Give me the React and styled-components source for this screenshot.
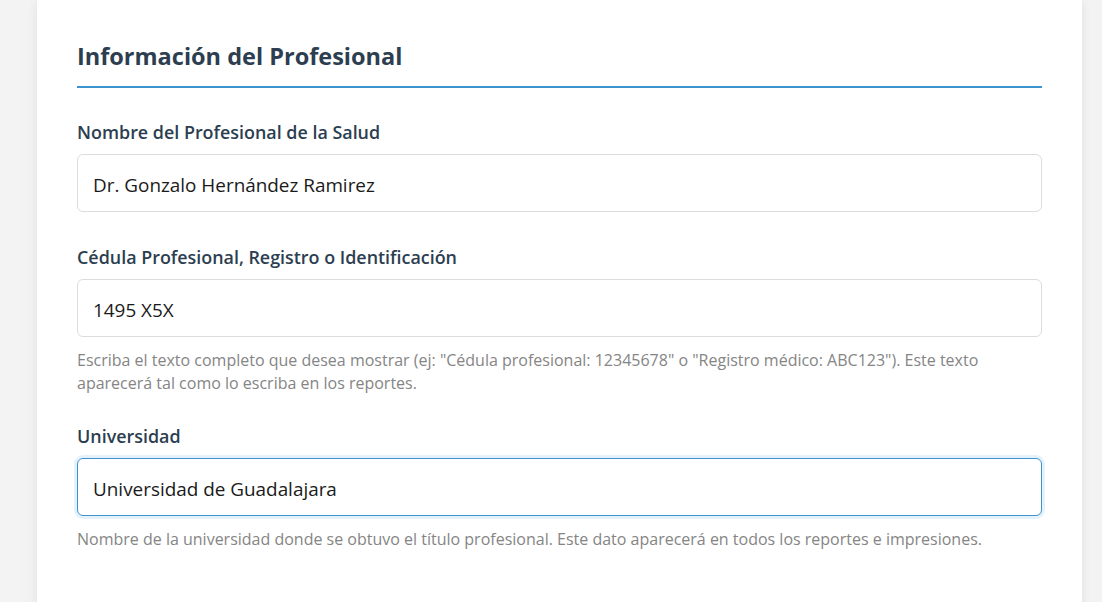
import React from "react";
import styled, { createGlobalStyle } from "styled-components";

const Global = createGlobalStyle`
  html, body { margin: 0; padding: 0; background: #f3f3f3; }
  body { font-family: "Open Sans", "Noto Sans", sans-serif; }
  * { box-sizing: border-box; }
`;

const Page = styled.div`
  width: 1102px;
  height: 602px;
  overflow: hidden;
  padding: 0 20px 0 37px;
`;

const Card = styled.section`
  width: 1045px;
  min-height: 640px;
  background: #fff;
  box-shadow: 0 2px 10px rgba(0, 0, 0, 0.08);
  padding: 42px 40px 40px;
`;

const Title = styled.h2`
  margin: 0 0 32px;
  font-size: 23.5px;
  line-height: 29px;
  font-weight: 700;
  color: #2c3e50;
  padding-bottom: 15px;
  border-bottom: 2px solid #3d93cf;
`;

const Group = styled.div`
  margin-bottom: 33px;
`;

const Label = styled.label`
  display: block;
  font-size: 17.9px;
  line-height: 24px;
  font-weight: 600;
  color: #2c3e50;
  margin-bottom: 10px;
`;

const Input = styled.input`
  display: block;
  width: 100%;
  height: 58px;
  padding: 3px 15px 0;
  font-family: inherit;
  font-size: 18.9px;
  color: #1a1a1a;
  background: #fff;
  border: 1px solid ${(p) => (p.$focused ? "#3d93cf" : "#dcdcdc")};
  border-radius: 6px;
  outline: none;
  box-shadow: ${(p) => (p.$focused ? "0 0 0 3px rgba(52,152,219,0.12)" : "none")};
`;

const Help = styled.p`
  margin: 12px 0 -4px;
  font-size: 16px;
  line-height: 23px;
  color: #858585;
`;

const fields = [
  {
    label: "Nombre del Profesional de la Salud",
    value: "Dr. Gonzalo Hernández Ramirez",
  },
  {
    label: "Cédula Profesional, Registro o Identificación",
    value: "1495 X5X",
    help:
      'Escriba el texto completo que desea mostrar (ej: "Cédula profesional: 12345678" o "Registro médico: ABC123"). Este texto aparecerá tal como lo escriba en los reportes.',
  },
  {
    label: "Universidad",
    value: "Universidad de Guadalajara",
    focused: true,
    help:
      "Nombre de la universidad donde se obtuvo el título profesional. Este dato aparecerá en todos los reportes e impresiones.",
  },
];

export default function App() {
  return (
    <>
      <Global />
      <Page>
        <Card>
          <Title>Información del Profesional</Title>
          {fields.map((f) => (
            <Group key={f.label}>
              <Label>{f.label}</Label>
              <Input $focused={f.focused} defaultValue={f.value} readOnly />
              {f.help && <Help>{f.help}</Help>}
            </Group>
          ))}
        </Card>
      </Page>
    </>
  );
}
